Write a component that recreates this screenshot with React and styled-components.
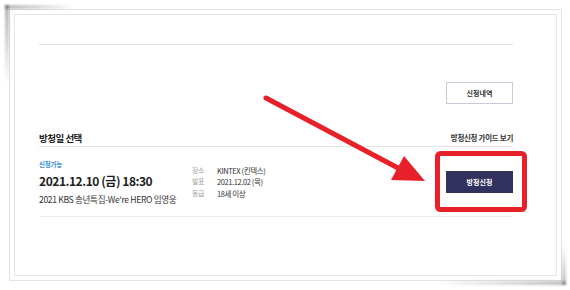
import React from 'react';
import styled, { createGlobalStyle } from 'styled-components';

const GlobalStyle = createGlobalStyle`
  html, body {
    margin: 0;
    padding: 0;
    background: #fff;
  }
  body {
    font-family: 'Noto Sans CJK KR', 'Noto Sans', sans-serif;
    color: #222;
  }
`;

const Page = styled.div`
  position: relative;
  width: 570px;
  height: 290px;
  overflow: hidden;
`;

const Frame = styled.div`
  position: relative;
  margin: 9px 0 0 9px;
  width: 553px;
  height: 272px;
  box-sizing: border-box;
  border: 1px solid #e3e3e3;
  padding: 4px;
  background: #fff;

  &::before {
    content: '';
    position: absolute;
    left: -5px;
    top: -5px;
    width: 4px;
    height: 80px;
    background: linear-gradient(to bottom, rgba(0, 0, 0, 0.3), rgba(0, 0, 0, 0));
    filter: blur(1px);
  }

  &::after {
    content: '';
    position: absolute;
    right: -5px;
    bottom: -5px;
    width: 130px;
    height: 4px;
    background: linear-gradient(to left, rgba(0, 0, 0, 0.25), rgba(0, 0, 0, 0));
    filter: blur(1px);
  }
`;

const TopShade = styled.div`
  position: absolute;
  left: -5px;
  top: -5px;
  width: 70px;
  height: 4px;
  background: linear-gradient(to right, rgba(0, 0, 0, 0.28), rgba(0, 0, 0, 0));
  filter: blur(1px);
`;

const SideShade = styled.div`
  position: absolute;
  right: -5px;
  bottom: -5px;
  width: 4px;
  height: 40px;
  background: linear-gradient(to top, rgba(0, 0, 0, 0.25), rgba(0, 0, 0, 0));
  filter: blur(1px);
`;

const Inner = styled.div`
  height: 100%;
  box-sizing: border-box;
  border: 1px solid #e6e6e6;
  padding-left: 24px;
`;

const Content = styled.div`
  width: 474px;
  display: flex;
  flex-direction: column;
`;

const Rule = styled.div`
  margin-top: 29px;
  height: 1px;
  background: #e2e2e2;
`;

const Toolbar = styled.div`
  display: flex;
  justify-content: flex-end;
  margin-top: 37px;
`;

const OutlineButton = styled.button`
  width: 67px;
  height: 22px;
  box-sizing: border-box;
  border: 1px solid #c9c9da;
  background: #fff;
  font-family: inherit;
  font-size: 7px;
  font-weight: 700;
  color: #333;
  padding: 0;
`;

const Header = styled.div`
  display: flex;
  justify-content: space-between;
  align-items: center;
  margin-top: 26px;
  height: 15px;
  padding-bottom: 1px;
  border-bottom: 1px solid #e4e4e4;
`;

const Title = styled.h2`
  margin: 0;
  font-size: 9.5px;
  font-weight: 700;
  color: #222;
  letter-spacing: -0.5px;
`;

const GuideLink = styled.span`
  font-size: 7.5px;
  font-weight: 700;
  color: #333;
  letter-spacing: -0.3px;
`;

const Row = styled.div`
  display: flex;
  align-items: center;
  padding: 12px 0 11px;
  border-bottom: 1px solid #ececec;
`;

const ShowInfo = styled.div`
  flex: none;
  width: 153px;
  display: flex;
  flex-direction: column;
`;

const Status = styled.div`
  font-size: 6.5px;
  line-height: 10px;
  color: #3a8fd6;
  font-weight: 700;
  letter-spacing: -0.2px;
`;

const DateTime = styled.div`
  margin-top: 4px;
  font-size: 12px;
  line-height: 16px;
  font-weight: 700;
  color: #1c1c1c;
  letter-spacing: -0.45px;
`;

const ShowName = styled.div`
  margin-top: 4px;
  font-size: 8.6px;
  line-height: 12px;
  color: #333;
  letter-spacing: -0.35px;
  white-space: nowrap;
`;

const Details = styled.dl`
  margin: 0;
  display: grid;
  grid-template-columns: 25px auto;
  flex: 1;
`;

const Term = styled.dt`
  font-size: 7px;
  line-height: 11.5px;
  color: #a0a0a0;
  letter-spacing: -0.4px;
`;

const Desc = styled.dd`
  margin: 0;
  font-size: 7.5px;
  line-height: 11.5px;
  color: #333;
  letter-spacing: -0.4px;
`;

const ApplyButton = styled.button`
  flex: none;
  width: 67px;
  height: 22px;
  border: none;
  background: #32325e;
  color: #fff;
  font-family: inherit;
  font-size: 7px;
  font-weight: 700;
  padding: 0;
`;

const Annotation = styled.svg`
  position: absolute;
  left: 0;
  top: 0;
  pointer-events: none;
`;

const details = [
  ['장소', 'KINTEX (킨텍스)'],
  ['발표', '2021.12.02 (목)'],
  ['등급', '18세 이상'],
];

export default function App() {
  return (
    <Page>
      <GlobalStyle />
      <Frame>
        <TopShade />
        <SideShade />
        <Inner>
          <Content>
            <Rule />
            <Toolbar>
              <OutlineButton>신청내역</OutlineButton>
            </Toolbar>
            <Header>
              <Title>방청일 선택</Title>
              <GuideLink>방청신청 가이드 보기</GuideLink>
            </Header>
            <Row>
              <ShowInfo>
                <Status>신청가능</Status>
                <DateTime>2021.12.10 (금) 18:30</DateTime>
                <ShowName>2021 KBS 송년특집-We're HERO 임영웅</ShowName>
              </ShowInfo>
              <Details>
                {details.map(([k, v]) => (
                  <React.Fragment key={k}>
                    <Term>{k}</Term>
                    <Desc>{v}</Desc>
                  </React.Fragment>
                ))}
              </Details>
              <ApplyButton>방청신청</ApplyButton>
            </Row>
          </Content>
        </Inner>
      </Frame>
      <Annotation width="570" height="290" viewBox="0 0 570 290">
        <line x1="266" y1="98" x2="398" y2="168" stroke="#e8202a" strokeWidth="5" strokeLinecap="round" />
        <polygon points="404,156 391,180 425,181" fill="#e8202a" />
        <rect x="437.5" y="153.5" width="87" height="56" rx="3" fill="none" stroke="#e8202a" strokeWidth="5" />
      </Annotation>
    </Page>
  );
}
